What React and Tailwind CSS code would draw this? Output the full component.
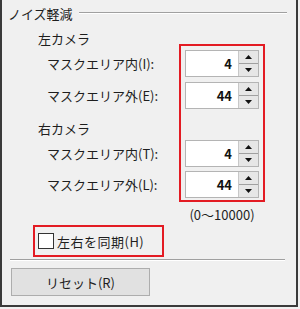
const font = { fontFamily: '"Noto Sans CJK JP", "Noto Sans", sans-serif' };

const Up = () => (
  <svg width="7" height="4" viewBox="0 0 7 4">
    <path d="M3.5 0L7 4H0z" fill="#111" />
  </svg>
);

const Down = () => (
  <svg width="7" height="4" viewBox="0 0 7 4">
    <path d="M0 0H7L3.5 4z" fill="#111" />
  </svg>
);

const Spin = ({ value, className = "" }) => (
  <div className={`flex h-[27px] border border-[#b4b4b4] bg-white ${className}`}>
    <div className="flex flex-1 items-center justify-end pr-[6px] text-[13px] font-bold text-[#111]">{value}</div>
    <div className="flex w-[20px] flex-col border-l border-[#c8c8c8] bg-[#e6e6e6]">
      <div className="flex flex-1 items-center justify-center border-b border-[#a0a0a0]">
        <Up />
      </div>
      <div className="flex flex-1 items-center justify-center">
        <Down />
      </div>
    </div>
  </div>
);

const Label = ({ children, className = "" }) => (
  <div className={`flex h-[27px] items-center pl-[9px] ${className}`}>{children}</div>
);

export default function App() {
  return (
    <div className="h-[309px] w-[300px] bg-[#f0f0f0] text-[13px] leading-none text-[#1e1e1e]" style={font}>
      <div className="flex h-[307px] w-[298px] flex-col border-b-2 border-l-2 border-r-2 border-[#3a3a3a]">
        <div className="mt-[5px] flex h-[16px] items-center pl-[6px] pr-[9px]">
          <span>ノイズ軽減</span>
          <div className="ml-[6px] h-[2px] flex-1 border-b border-t border-b-white border-t-[#a0a0a0]" />
        </div>

        <div className="mt-[9px] flex items-start">
          <div className="w-[177px] shrink-0 pl-[36px]">
            <div className="flex h-[16px] items-center">左カメラ</div>
            <Label className="mt-[4px]">マスクエリア内(I):</Label>
            <Label className="mt-[5px]">マスクエリア外(E):</Label>
            <div className="mt-[11px] flex h-[16px] items-center">右カメラ</div>
            <Label className="mt-[4px]">マスクエリア内(T):</Label>
            <Label className="mt-[4px]">マスクエリア外(L):</Label>
          </div>
          <div className="mt-[14px] w-[86px] shrink-0">
            <div className="border-2 border-[#e31b23] px-[4px] pb-[2px] pt-[4px]">
              <Spin value="4" />
              <Spin value="44" className="mt-[5px]" />
              <Spin value="4" className="mt-[31px]" />
              <Spin value="44" className="mt-[4px]" />
            </div>
            <div className="mt-[5px] flex h-[14px] items-center justify-center">(0〜10000)</div>
          </div>
        </div>

        <div className="ml-[31px] mt-[4px] flex h-[32px] w-[131px] items-center gap-[3px] border-2 border-[#e31b23] pl-[3px]">
          <div className="h-[16px] w-[16px] border border-[#333] bg-white" />
          <span className="tracking-[0.5px]">左右を同期(H)</span>
        </div>

        <div className="ml-[8px] mr-[11px] mt-[2px] h-[2px] border-b border-t border-b-white border-t-[#a0a0a0]" />

        <div className="ml-[9px] mt-[7px] flex h-[28px] w-[139px] items-center justify-center border border-[#adadad] bg-[#e1e1e1]">
          リセット(R)
        </div>
      </div>
    </div>
  );
}
